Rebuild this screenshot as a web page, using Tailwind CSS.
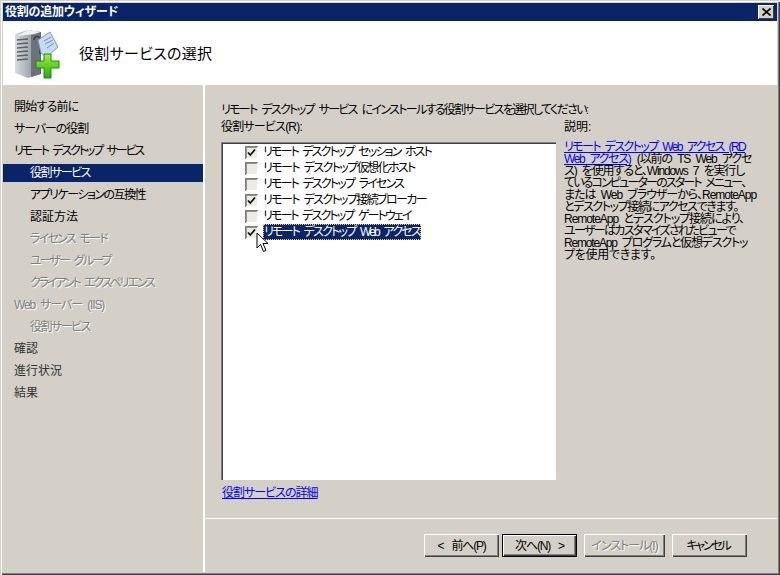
<!DOCTYPE html>
<html lang="ja">
<head>
  <meta charset="UTF-8" />
  <meta name="viewport" content="width=device-width, initial-scale=1" />
  <title>役割の追加ウィザード</title>
  <script src="https://cdn.jsdelivr.net/npm/@tailwindcss/browser@4"></script>
</head>
<body class="bg-[#d4d0c8] overflow-hidden">
<!-- ウィンドウ枠 -->
<div class="relative w-[780px] h-[575px] bg-[#d4d0c8] text-[12px] leading-[16px] text-black [font-feature-settings:'palt'] [word-spacing:3px] font-['Liberation_Sans','Noto_Sans_CJK_JP',sans-serif] pt-[3px] pl-[3px] pr-[3px] pb-[3px] shadow-[inset_1px_1px_#d4d0c8,inset_2px_2px_#fff,inset_-1px_-1px_#404040,inset_-2px_-2px_#808080]">
  <div class="flex flex-col h-full">

    <!-- タイトルバー -->
    <div class="h-[18px] shrink-0 bg-[#0a246a] flex items-center justify-between pl-[2px] pr-[3px]">
      <span class="text-white font-bold tracking-[-0.2px]">役割の追加ウィザード</span>
      <button class="w-[16px] h-[14px] bg-[#d4d0c8] flex items-center justify-center shadow-[inset_1px_1px_#fff,inset_-1px_-1px_#404040]">
        <svg width="9" height="8" viewBox="0 0 9 8"><path d="M0.5 0.5L8.5 7.5M8.5 0.5L0.5 7.5" stroke="#000" stroke-width="1.6" fill="none"/></svg>
      </button>
    </div>

    <!-- ヘッダー -->
    <div class="h-[64px] shrink-0 bg-white flex items-center pl-[11px] gap-[18px]">
      <svg width="47" height="51" viewBox="0 0 47 51">
        <defs>
          <linearGradient id="srv" x1="0" x2="1" y1="0" y2="0"><stop offset="0" stop-color="#d8dbe0"/><stop offset="0.65" stop-color="#9aa0a8"/><stop offset="1" stop-color="#5b6068"/></linearGradient>
          <linearGradient id="plus" x1="0" x2="0" y1="0" y2="1"><stop offset="0" stop-color="#a4ec3a"/><stop offset="1" stop-color="#22b012"/></linearGradient>
        </defs>
        <path d="M1 6L14 2L27 4V46L14 50L1 45Z" fill="url(#srv)"/>
        <path d="M14 2L27 4L20 6L3 8Z" fill="#eef0f2"/>
        <path d="M17 7L26 6V46L17 49Z" fill="#6d7279"/>
        <path d="M3 12L14 11M3 16L14 15M3 20L14 19M3 24L14 23M3 28L14 27M3 32L14 31" stroke="#5a5f66" stroke-width="1.4"/>
        <path d="M20 12C20 8 25 7 26 11V26" stroke="#3e4349" stroke-width="1.5" fill="none"/>
        <path d="M24 12L36 4L44 19L33 29L27 25Z" fill="#c7dcf2" stroke="#7f9fc2"/>
        <path d="M30 13L37 9M31 16L39 12M33 20L40 15" stroke="#6f8fb5" stroke-width="1"/>
        <path d="M30 26H37V33H45V40H37V50H30V40H22V33H30Z" fill="url(#plus)" stroke="#1f8a12" stroke-width="1"/>
      </svg>
      <h1 class="text-[15px] tracking-[0.3px] mt-[2px]">役割サービスの選択</h1>
    </div>

    <div class="flex flex-1 min-h-0">
      <!-- 左のステップ一覧 -->
      <nav class="w-[200px] shrink-0 pt-[13px] flex flex-col gap-[4px] whitespace-nowrap">
        <div class="h-[18px] pl-[11px] flex items-center tracking-[-0.8px]">開始する前に</div>
        <div class="h-[18px] pl-[11px] flex items-center tracking-[-1.1px]">サーバーの役割</div>
        <div class="h-[18px] pl-[11px] flex items-center tracking-[-2.08px]">リモート デスクトップ サービス</div>
        <div class="h-[18px] pl-[27px] flex items-center tracking-[-1.5px] bg-[#0a246a] text-white">役割サービス</div>
        <div class="h-[18px] pl-[27px] flex items-center tracking-[-1.5px]">アプリケーションの互換性</div>
        <div class="h-[18px] pl-[27px] flex items-center">認証方法</div>
        <div class="h-[18px] pl-[27px] flex items-center tracking-[-1.73px] text-[#808080] [text-shadow:1px_1px_0_#fff]">ライセンス モード</div>
        <div class="h-[18px] pl-[27px] flex items-center tracking-[-1.83px] text-[#808080] [text-shadow:1px_1px_0_#fff]">ユーザー グループ</div>
        <div class="h-[18px] pl-[27px] flex items-center tracking-[-2.1px] text-[#808080] [text-shadow:1px_1px_0_#fff]">クライアント エクスペリエンス</div>
        <div class="h-[18px] pl-[11px] flex items-center tracking-[-1.13px] text-[#808080] [text-shadow:1px_1px_0_#fff]">Web サーバー (IIS)</div>
        <div class="h-[18px] pl-[27px] flex items-center tracking-[-1.5px] text-[#808080] [text-shadow:1px_1px_0_#fff]">役割サービス</div>
        <div class="h-[18px] pl-[11px] flex items-center text-[#333]">確認</div>
        <div class="h-[18px] pl-[11px] flex items-center text-[#333]">進行状況</div>
        <div class="h-[18px] pl-[11px] flex items-center text-[#333]">結果</div>
      </nav>

      <!-- 右の内容 -->
      <main class="flex-1 min-w-0 border-l-2 border-white flex flex-col">
        <div class="flex-1 min-h-0 pl-[16px] pr-[20px] pt-[17px]">
          <p class="h-[16px] whitespace-nowrap tracking-[-1.66px]">リモート デスクトップ サービス にインストールする役割サービスを選択してください:</p>
          <div class="flex gap-[8px] mt-[1px]">
            <div class="w-[335px] shrink-0">
              <label class="block h-[16px] tracking-[-0.8px]">役割サービス(R):</label>
              <div class="mt-[7px] h-[338px] bg-white pt-[2px] pl-[24px] whitespace-nowrap shadow-[inset_1px_1px_#808080,inset_2px_2px_#404040,inset_-1px_-1px_#fff]">
                <div class="h-[16px] flex items-center gap-[5px]">
                  <span class="w-[13px] h-[13px] bg-[#ecebe8] flex items-center justify-center shadow-[inset_1px_1px_#808080,inset_-1px_-1px_#fff,inset_2px_2px_#909090]"><svg width="9" height="9" viewBox="0 0 9 9"><path d="M1 4.5L3.3 7L8 1.5" stroke="#111" stroke-width="1.8" fill="none"/></svg></span>
                  <span class="tracking-[-1.86px]">リモート デスクトップ セッション ホスト</span>
                </div>
                <div class="h-[16px] flex items-center gap-[5px]">
                  <span class="w-[13px] h-[13px] bg-[#ecebe8] shadow-[inset_1px_1px_#808080,inset_-1px_-1px_#fff,inset_2px_2px_#909090]"></span>
                  <span class="tracking-[-1.59px]">リモート デスクトップ仮想化ホスト</span>
                </div>
                <div class="h-[16px] flex items-center gap-[5px]">
                  <span class="w-[13px] h-[13px] bg-[#ecebe8] shadow-[inset_1px_1px_#808080,inset_-1px_-1px_#fff,inset_2px_2px_#909090]"></span>
                  <span class="tracking-[-1.82px]">リモート デスクトップ ライセンス</span>
                </div>
                <div class="h-[16px] flex items-center gap-[5px]">
                  <span class="w-[13px] h-[13px] bg-[#ecebe8] flex items-center justify-center shadow-[inset_1px_1px_#808080,inset_-1px_-1px_#fff,inset_2px_2px_#909090]"><svg width="9" height="9" viewBox="0 0 9 9"><path d="M1 4.5L3.3 7L8 1.5" stroke="#111" stroke-width="1.8" fill="none"/></svg></span>
                  <span class="tracking-[-1.62px]">リモート デスクトップ接続ブローカー</span>
                </div>
                <div class="h-[16px] flex items-center gap-[5px]">
                  <span class="w-[13px] h-[13px] bg-[#ecebe8] shadow-[inset_1px_1px_#808080,inset_-1px_-1px_#fff,inset_2px_2px_#909090]"></span>
                  <span class="tracking-[-1.88px]">リモート デスクトップ ゲートウェイ</span>
                </div>
                <div class="h-[16px] flex items-center gap-[5px]">
                  <span class="w-[13px] h-[13px] bg-[#ecebe8] flex items-center justify-center shadow-[inset_1px_1px_#808080,inset_-1px_-1px_#fff,inset_2px_2px_#909090]"><svg width="9" height="9" viewBox="0 0 9 9"><path d="M1 4.5L3.3 7L8 1.5" stroke="#111" stroke-width="1.8" fill="none"/></svg></span>
                  <span class="px-[1px] tracking-[-1.8px] bg-[#0a246a] text-white outline-1 outline-dotted outline-[#f0d060] -outline-offset-1">リモート デスクトップ Web アクセス</span>
                </div>
              </div>
              <a href="#" class="block mt-[5px] ml-[1px] text-[#0000ff] underline tracking-[-1px]">役割サービスの詳細</a>
            </div>
            <div class="flex-1 min-w-0">
              <div class="h-[16px]">説明:</div>
              <div class="mt-[6px] leading-[12px] whitespace-nowrap">
                <div class="tracking-[-1.6px]"><a href="#" class="text-[#0000ff] underline">リモート デスクトップ Web アクセス (RD</a></div>
                <div><a href="#" class="text-[#0000ff] underline tracking-[-1.33px]">Web アクセス)</a> <span class="tracking-[-1.1px]">(以前の TS Web アクセ</span></div>
                <div class="tracking-[-1.12px]">ス) を使用すると、Windows 7 を実行し</div>
                <div class="tracking-[-1.85px]">ているコンピューターのスタート メニュー、</div>
                <div class="tracking-[-1.04px]">または Web ブラウザーから、RemoteApp</div>
                <div class="tracking-[-1.4px]">とデスクトップ接続にアクセスできます。</div>
                <div class="tracking-[-1.04px]">RemoteApp とデスクトップ接続により、</div>
                <div class="tracking-[-1.65px]">ユーザーはカスタマイズされたビューで</div>
                <div class="tracking-[-1.19px]">RemoteApp プログラムと仮想デスクトッ</div>
                <div class="tracking-[-0.3px]">プを使用できます。</div>
              </div>
            </div>
          </div>
        </div>

        <!-- ボタン -->
        <div class="h-[53px] shrink-0 border-t border-white flex items-start pt-[15px] pl-[219px] mb-[1px] whitespace-nowrap">
          <button class="w-[75px] h-[23px] flex items-center justify-center tracking-[-1.2px] [word-spacing:6px] shadow-[inset_1px_1px_#fff,inset_-1px_-1px_#404040,inset_-2px_-2px_#808080]">&lt; 前へ(P)</button>
          <button class="ml-[3px] w-[75px] h-[23px] flex items-center justify-center tracking-[-1.2px] [word-spacing:6px] border border-black shadow-[inset_1px_1px_#fff,inset_-1px_-1px_#404040,inset_-2px_-2px_#808080]">次へ(N) &gt;</button>
          <button class="ml-[7px] w-[81px] h-[23px] flex items-center justify-center tracking-[-1px] text-[#808080] [text-shadow:1px_1px_0_#fff] shadow-[inset_1px_1px_#fff,inset_-1px_-1px_#404040,inset_-2px_-2px_#808080]">インストール(I)</button>
          <button class="ml-[7px] w-[75px] h-[23px] pr-[3px] flex items-center justify-center tracking-[-2.2px] shadow-[inset_1px_1px_#fff,inset_-1px_-1px_#404040,inset_-2px_-2px_#808080]">キャンセル</button>
        </div>
      </main>
    </div>
  </div>

  <!-- マウスカーソル -->
  <svg class="absolute left-[256px] top-[232px]" width="14" height="21" viewBox="0 0 14 21"><path d="M1 1V16L4.5 12.5L7.5 19.5L10 18.5L7 11.5H12Z" fill="#fff" stroke="#000" stroke-width="1"/></svg>
</div>
</body>
</html>
